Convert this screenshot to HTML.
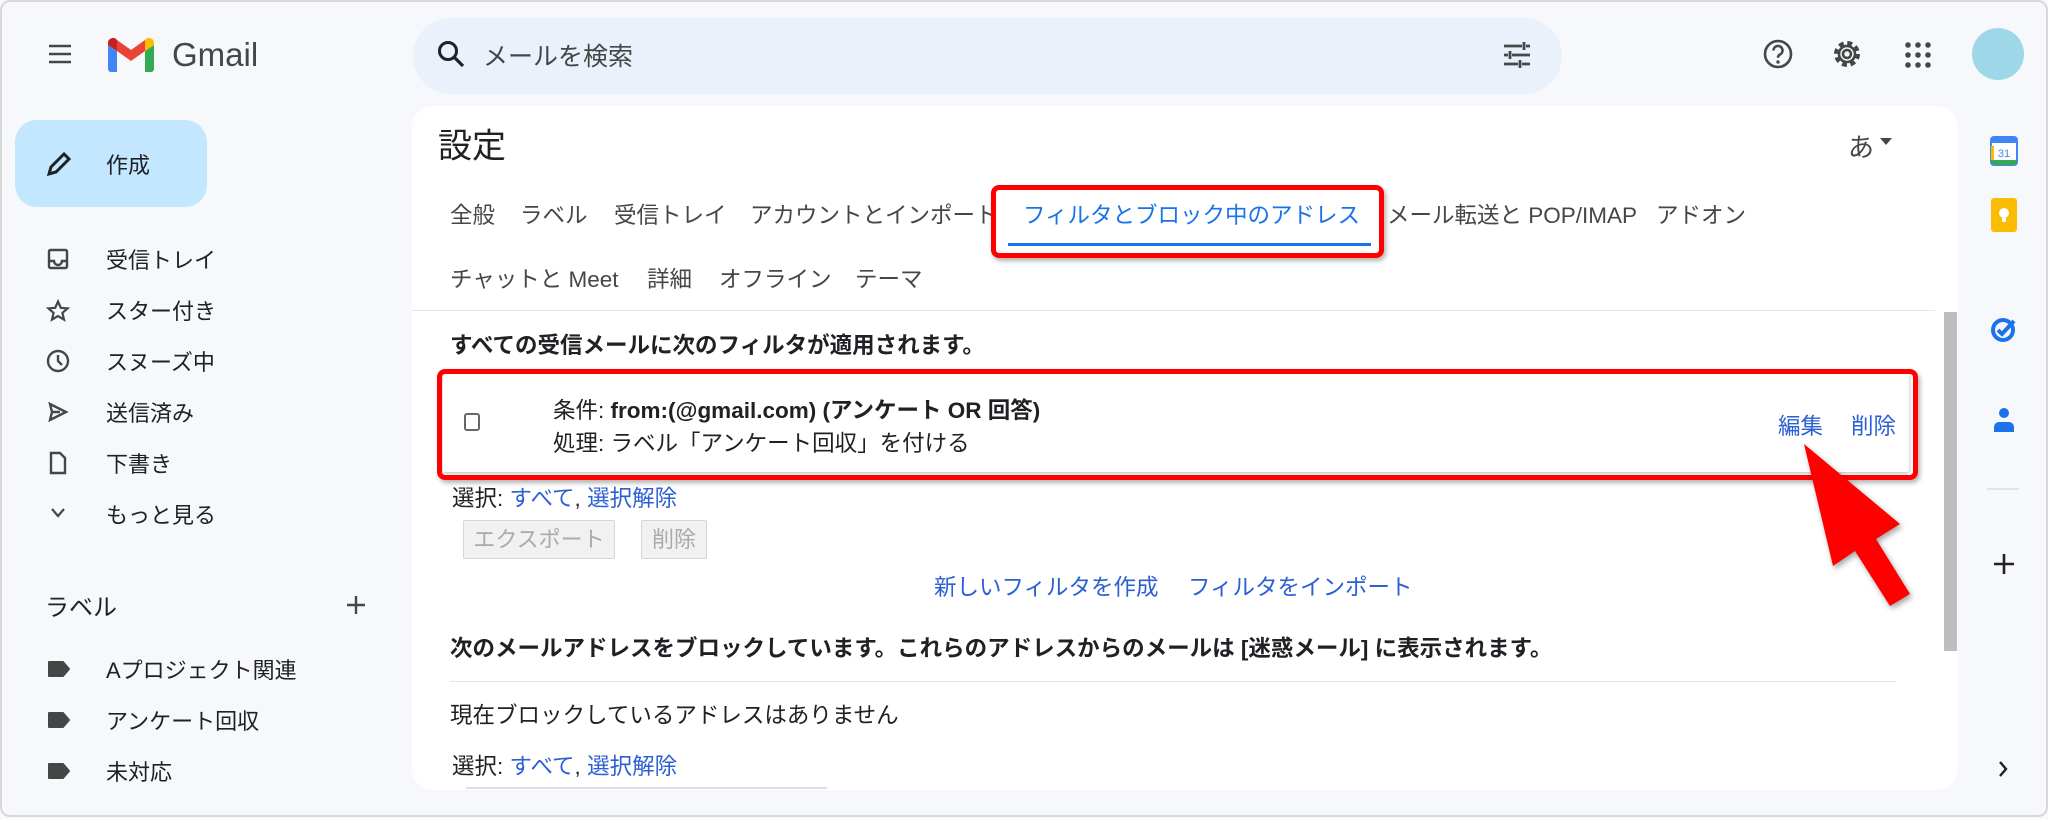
<!DOCTYPE html>
<html><head><meta charset="utf-8">
<style>
*{margin:0;padding:0;box-sizing:border-box}
body{width:2048px;height:817px;overflow:hidden;background:#f6f8fc;font-family:"Liberation Sans","Noto Sans CJK JP",sans-serif;color:#202124;position:relative;border:2px solid #d8d8d8;border-radius:10px}
.a{position:absolute;white-space:nowrap}
.t{transform:translateY(-50%)}
.nav{font-size:22px;color:#202124}
.tab{font-size:22.5px;color:#444746}
.c{font-size:22.5px}
.lk{color:#2c5fd4}
</style></head><body>
<svg class="a" style="left:45px;top:40px" width="26" height="24" viewBox="0 0 26 24"><path d="M2 4h22M2 12h22M2 20h22" stroke="#444746" stroke-width="2.6"/></svg>
<svg class="a" style="left:104px;top:35px" width="50" height="36" viewBox="0 0 50 36">
<path d="M2 8v24a3 3 0 0 0 3 3h6V14z" fill="#4285f4"/><path d="M48 8v24a3 3 0 0 1-3 3h-6V14z" fill="#34a853"/>
<path d="M39 3l0 11 9-6V6a5 5 0 0 0-9-3z" fill="#fbbc04"/><path d="M11 3v11l14 10 14-10V3L25 13z" fill="#ea4335"/><path d="M2 6v2l9 6V3a5 5 0 0 0-9 3z" fill="#c5221f"/></svg>
<div class="a t" style="left:170px;top:53px;font-size:33px;color:#444746">Gmail</div>
<div class="a" style="left:411px;top:16px;width:1149px;height:76px;border-radius:38px;background:#eaf1fb"></div>
<svg class="a" style="left:434px;top:37px" width="30" height="30" viewBox="0 0 30 30"><circle cx="12" cy="12" r="8.5" fill="none" stroke="#202124" stroke-width="3"/><path d="M18 18l9 9" stroke="#202124" stroke-width="3.2"/></svg>
<div class="a t" style="left:481px;top:53px;font-size:25px;color:#444746">メールを検索</div>
<svg class="a" style="left:1500px;top:38px" width="30" height="30" viewBox="0 0 30 30" stroke="#444746" stroke-width="2.8"><path d="M2 6h18M24 6h4M22 2v8M2 15h4M10 15h18M8 11v8M2 24h14M20 24h8M18 20v8"/></svg>
<svg class="a" style="left:1760px;top:36px" width="32" height="32" viewBox="0 0 32 32"><circle cx="16" cy="16" r="13" fill="none" stroke="#444746" stroke-width="2.6"/><path d="M11.5 12.5a4.5 4.5 0 1 1 6.5 4c-1.5.8-2 1.6-2 3.2" fill="none" stroke="#444746" stroke-width="2.6"/><circle cx="16" cy="24" r="1.7" fill="#444746"/></svg>
<svg class="a" style="left:1829px;top:36px" width="32" height="32" viewBox="0 0 32 32"><circle cx="16" cy="16" r="10" fill="none" stroke="#444746" stroke-width="6" stroke-dasharray="4.5 3.35"/><circle cx="16" cy="16" r="8" fill="none" stroke="#444746" stroke-width="2.6"/><circle cx="16" cy="16" r="4" fill="none" stroke="#444746" stroke-width="2.6"/></svg>
<svg class="a" style="left:1902px;top:39px" width="28" height="28" viewBox="0 0 28 28" fill="#444746"><circle cx="4" cy="4" r="2.8"/><circle cx="14" cy="4" r="2.8"/><circle cx="24" cy="4" r="2.8"/><circle cx="4" cy="14" r="2.8"/><circle cx="14" cy="14" r="2.8"/><circle cx="24" cy="14" r="2.8"/><circle cx="4" cy="24" r="2.8"/><circle cx="14" cy="24" r="2.8"/><circle cx="24" cy="24" r="2.8"/></svg>
<div class="a" style="left:1970px;top:26px;width:52px;height:52px;border-radius:50%;background:#9ed8e8"></div>
<div class="a" style="left:13px;top:118px;width:192px;height:87px;border-radius:22px;background:#c2e7ff"></div>
<svg class="a" style="left:43px;top:148px" width="28" height="28" viewBox="0 0 28 28"><path d="M4 24l2-7L19 4l5 5L11 22z" fill="none" stroke="#202124" stroke-width="3"/></svg>
<div class="a t nav" style="left:104px;top:162px">作成</div>
<svg class="a" style="left:45px;top:246px" width="22" height="22" viewBox="0 0 22 22" fill="none" stroke="#444746" stroke-width="2.4"><rect x="2" y="2" width="18" height="18" rx="1.5"/><path d="M2 13h5a4 4 0 0 0 8 0h5"/></svg>
<div class="a t nav" style="left:104px;top:257px">受信トレイ</div>
<svg class="a" style="left:44px;top:297px" width="24" height="24" viewBox="0 0 24 24"><path d="M12 2.5l2.8 6.3 6.8.6-5.2 4.5 1.6 6.7L12 17l-6 3.6 1.6-6.7L2.4 9.4l6.8-.6z" fill="none" stroke="#444746" stroke-width="2.2"/></svg>
<div class="a t nav" style="left:104px;top:308px">スター付き</div>
<svg class="a" style="left:44px;top:347px" width="24" height="24" viewBox="0 0 24 24" fill="none" stroke="#444746" stroke-width="2.4"><circle cx="12" cy="12" r="10"/><path d="M12 6v6l4 4"/></svg>
<div class="a t nav" style="left:104px;top:359px">スヌーズ中</div>
<svg class="a" style="left:45px;top:399px" width="22" height="22" viewBox="0 0 22 22"><path d="M3 3l16 8-16 8 2-8z M5 11h8" fill="none" stroke="#444746" stroke-width="2.4"/></svg>
<div class="a t nav" style="left:104px;top:410px">送信済み</div>
<svg class="a" style="left:47px;top:449px" width="18" height="24" viewBox="0 0 18 24"><path d="M2 2h9l5 5v15H2z" fill="none" stroke="#444746" stroke-width="2.4"/></svg>
<div class="a t nav" style="left:104px;top:461px">下書き</div>
<svg class="a" style="left:48px;top:505px" width="16" height="12" viewBox="0 0 16 12"><path d="M2 2l6 7 6-7" fill="none" stroke="#444746" stroke-width="2.2"/></svg>
<div class="a t nav" style="left:104px;top:512px">もっと見る</div>
<div class="a t" style="left:43px;top:603px;font-size:24px;color:#202124">ラベル</div>
<svg class="a" style="left:343px;top:592px" width="22" height="22" viewBox="0 0 22 22"><path d="M11 2v18M2 11h18" stroke="#444746" stroke-width="2.4"/></svg>
<svg class="a" style="left:45px;top:658px" width="24" height="18" viewBox="0 0 24 18"><path d="M2 2h14l6 7-6 7H2z" fill="#444746" stroke="#444746" stroke-width="2" stroke-linejoin="round"/></svg>
<div class="a t nav" style="left:104px;top:667px">Aプロジェクト関連</div>
<svg class="a" style="left:45px;top:709px" width="24" height="18" viewBox="0 0 24 18"><path d="M2 2h14l6 7-6 7H2z" fill="#444746" stroke="#444746" stroke-width="2" stroke-linejoin="round"/></svg>
<div class="a t nav" style="left:104px;top:718px">アンケート回収</div>
<svg class="a" style="left:45px;top:760px" width="24" height="18" viewBox="0 0 24 18"><path d="M2 2h14l6 7-6 7H2z" fill="#444746" stroke="#444746" stroke-width="2" stroke-linejoin="round"/></svg>
<div class="a t nav" style="left:104px;top:769px">未対応</div>
<div class="a" style="left:410px;top:104px;width:1546px;height:684px;border-radius:21px;background:#fff"></div>
<div class="a t" style="left:436px;top:141px;font-size:34px;color:#202124">設定</div>
<div class="a t" style="left:1846px;top:144px;font-size:26px;color:#444746">あ</div>
<svg class="a" style="left:1878px;top:136px" width="12" height="8"><path d="M0 0h12L6 7z" fill="#444746"/></svg>
<div class="a t tab" style="left:448px;top:212px">全般</div>
<div class="a t tab" style="left:518px;top:212px">ラベル</div>
<div class="a t tab" style="left:612px;top:212px">受信トレイ</div>
<div class="a t tab" style="left:748px;top:212px">アカウントとインポート</div>
<div class="a t tab" style="left:1021px;top:212px;color:#1a73e8">フィルタとブロック中のアドレス</div>
<div class="a t tab" style="left:1385px;top:212px">メール転送と POP/IMAP</div>
<div class="a t tab" style="left:1654px;top:212px">アドオン</div>
<div class="a" style="left:1006px;top:241px;width:363px;height:3px;background:#1a73e8"></div>
<div class="a t tab" style="left:448px;top:276px">チャットと Meet</div>
<div class="a t tab" style="left:645px;top:276px">詳細</div>
<div class="a t tab" style="left:717px;top:276px">オフライン</div>
<div class="a t tab" style="left:853px;top:276px">テーマ</div>
<div class="a" style="left:410px;top:308px;width:1523px;height:1px;background:#e6e6e6"></div>
<div class="a" style="left:1942px;top:310px;width:13px;height:339px;background:#bdbdbd"></div>
<div class="a" style="left:989px;top:183px;width:393px;height:73px;border:5px solid #f00;border-radius:8px;box-shadow:2px 3px 5px rgba(0,0,0,.3)"></div>
<div class="a t c" style="left:448px;top:342px;font-weight:bold">すべての受信メールに次のフィルタが適用されます。</div>
<div class="a" style="left:441px;top:372px;width:1466px;height:98px;background:#fff;box-shadow:0 1px 4px rgba(0,0,0,.3)"></div>
<div class="a" style="left:462px;top:411px;width:16px;height:18px;border:2px solid #666;border-radius:3px"></div>
<div class="a t c" style="left:551px;top:407px;color:#202124">条件: <b>from:(@gmail.com) (アンケート OR 回答)</b></div>
<div class="a t c" style="left:551px;top:440px;color:#202124">処理: ラベル「アンケート回収」を付ける</div>
<div class="a t c lk" style="left:1776px;top:423px">編集</div>
<div class="a t c lk" style="left:1849px;top:423px">削除</div>
<div class="a" style="left:435px;top:367px;width:1481px;height:111px;border:5px solid #f00;border-radius:8px;box-shadow:2px 3px 5px rgba(0,0,0,.3)"></div>
<div class="a t c" style="left:450px;top:495px">選択: <span class="lk">すべて</span>, <span class="lk">選択解除</span></div>
<div class="a" style="left:461px;top:518px;width:152px;height:39px;background:#f1f1f1;border:1px solid #d6d6d6;border-radius:2px;font-size:22px;color:#aaa;text-align:center;line-height:37px">エクスポート</div>
<div class="a" style="left:639px;top:518px;width:66px;height:39px;background:#f1f1f1;border:1px solid #d6d6d6;border-radius:2px;font-size:22px;color:#aaa;text-align:center;line-height:37px">削除</div>
<div class="a t c lk" style="left:932px;top:584px">新しいフィルタを作成</div>
<div class="a t c lk" style="left:1186px;top:584px">フィルタをインポート</div>
<div class="a t c" style="left:448px;top:645px;font-weight:bold">次のメールアドレスをブロックしています。これらのアドレスからのメールは [迷惑メール] に表示されます。</div>
<div class="a" style="left:448px;top:679px;width:1446px;height:1px;background:#e3e3e3"></div>
<div class="a t c" style="left:448px;top:712px">現在ブロックしているアドレスはありません</div>
<div class="a t c" style="left:450px;top:763px">選択: <span class="lk">すべて</span>, <span class="lk">選択解除</span></div>
<div class="a" style="left:464px;top:785px;width:361px;height:2px;background:#ddd"></div>
<svg class="a" style="left:0;top:0;filter:drop-shadow(2px 3px 3px rgba(0,0,0,.35))" width="2048" height="817"><path d="M1802 442L1898 522L1874 537L1908 592L1888 604L1853 549L1831 564Z" fill="#f00"/></svg>
<svg class="a" style="left:1988px;top:134px" width="28" height="30" viewBox="0 0 28 30"><rect x="1" y="1" width="26" height="28" rx="3" fill="#fff" stroke="#4285f4" stroke-width="2"/><rect x="1" y="1" width="26" height="6" fill="#4285f4"/><path d="M1 24h26v2a3 3 0 0 1-3 3H4a3 3 0 0 1-3-3z" fill="#34a853"/><path d="M1 10v14h3V10z" fill="#fbbc04"/><text x="14" y="21" font-size="11" font-family="Liberation Sans" text-anchor="middle" fill="#4285f4">31</text></svg>
<svg class="a" style="left:1989px;top:196px" width="26" height="34" viewBox="0 0 26 34"><rect width="26" height="34" rx="3" fill="#fbbc04"/><circle cx="13" cy="15" r="5" fill="#fff"/><rect x="11" y="20" width="4" height="4" fill="#fff"/></svg>
<svg class="a" style="left:1988px;top:312px" width="28" height="30" viewBox="0 0 28 30"><circle cx="13" cy="16" r="10" fill="none" stroke="#1a73e8" stroke-width="4"/><path d="M8 16l4 4 12-13" fill="none" stroke="#1a73e8" stroke-width="4"/></svg>
<svg class="a" style="left:1990px;top:404px" width="24" height="28" viewBox="0 0 24 28" fill="#1a73e8"><circle cx="12" cy="7" r="5"/><path d="M2 26v-5a5 5 0 0 1 5-5h10a5 5 0 0 1 5 5v5z"/></svg>
<div class="a" style="left:1985px;top:486px;width:32px;height:2px;background:#e2e4e8"></div>
<svg class="a" style="left:1991px;top:551px" width="22" height="22" viewBox="0 0 22 22"><path d="M11 1v20M1 11h20" stroke="#202124" stroke-width="2.6"/></svg>
<svg class="a" style="left:1996px;top:758px" width="10" height="18" viewBox="0 0 10 18"><path d="M2 2l6 7-6 7" fill="none" stroke="#202124" stroke-width="2.4"/></svg>
</body></html>
